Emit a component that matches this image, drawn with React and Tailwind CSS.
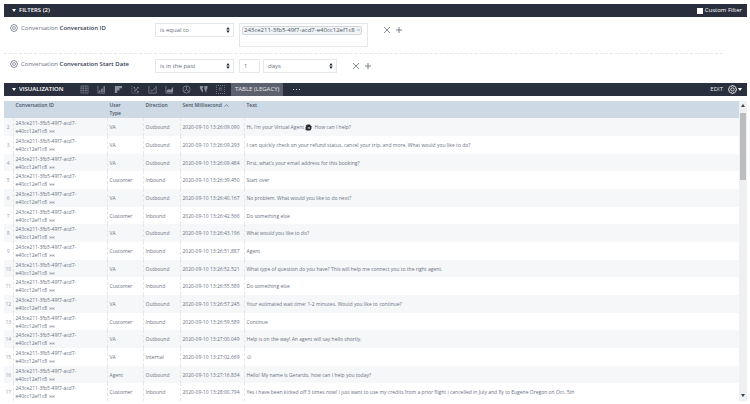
import React, { useState } from 'react';

const CONVERSATION_ID = '243ce211-3fb5-49f7-acd7-e40cc12ef1c8';

const rows = [
  { type: 'VA', direction: 'Outbound', sent: '2020-09-10 13:26:09.090', text: 'Hi, I’m your Virtual Agent', after: 'How can I help?' },
  { type: 'VA', direction: 'Outbound', sent: '2020-09-10 13:26:09.293', text: 'I can quickly check on your refund status, cancel your trip, and more. What would you like to do?' },
  { type: 'VA', direction: 'Outbound', sent: '2020-09-10 13:26:09.484', text: 'First, what’s your email address for this booking?' },
  { type: 'Customer', direction: 'Inbound', sent: '2020-09-10 13:26:39.450', text: 'Start over' },
  { type: 'VA', direction: 'Outbound', sent: '2020-09-10 13:26:40.167', text: 'No problem. What would you like to do next?' },
  { type: 'Customer', direction: 'Inbound', sent: '2020-09-10 13:26:42.566', text: 'Do something else' },
  { type: 'VA', direction: 'Outbound', sent: '2020-09-10 13:26:43.196', text: 'What would you like to do?' },
  { type: 'Customer', direction: 'Inbound', sent: '2020-09-10 13:26:51.887', text: 'Agent' },
  { type: 'VA', direction: 'Outbound', sent: '2020-09-10 13:26:52.521', text: 'What type of question do you have? This will help me connect you to the right agent.' },
  { type: 'Customer', direction: 'Inbound', sent: '2020-09-10 13:26:55.589', text: 'Do something else' },
  { type: 'VA', direction: 'Outbound', sent: '2020-09-10 13:26:57.245', text: 'Your estimated wait time: 1-2 minutes. Would you like to continue?' },
  { type: 'Customer', direction: 'Inbound', sent: '2020-09-10 13:26:59.589', text: 'Continue' },
  { type: 'VA', direction: 'Outbound', sent: '2020-09-10 13:27:00.049', text: 'Help is on the way! An agent will say hello shortly.' },
  { type: 'VA', direction: 'Internal', sent: '2020-09-10 13:27:02.669', text: '∅' },
  { type: 'Agent', direction: 'Outbound', sent: '2020-09-10 13:27:16.834', text: 'Hello! My name is Gerardo, how can I help you today?' },
  { type: 'Customer', direction: 'Inbound', sent: '2020-09-10 13:28:00.794', text: 'Yes i have been kicked off 3 times now! I just want to use my credits from a prior flight i cancelled in July and fly to Eugene Oregon on Oct. 5th' },
];

const charts = [
  { name: 'Table', draw: <path d="M1 1h8v8H1zM1 3.5h8M1 6h8M3.5 1v8M6.5 1v8" strokeDasharray="1.5 0.5" /> },
  { name: 'Column', draw: <><path d="M1 1v8h8" /><path d="M3 8V6M5.5 8V4M8 8V1.5" strokeWidth="1.6" /></> },
  { name: 'Bar', draw: <path d="M1 1h8v2.5H6V6H3.5v3H1z" fill="currentColor" stroke="none" /> },
  { name: 'Scatterplot', draw: <><path d="M1 1v8h8" strokeDasharray="1 1" /><path d="M3 3h1.5M5 5h1.5M7 3h1.5M3.5 6.5H5M7 7.5h1.5" strokeWidth="1.5" /></> },
  { name: 'Line', draw: <path d="M1 1v8h8V1M2.5 5.5l2 1.5L8.5 2.5" /> },
  { name: 'Area', draw: <><path d="M1 1v8h8" /><path d="M2 8V6l2-1.5L6 5.5 9 2v6z" fill="currentColor" stroke="none" /></> },
  { name: 'Pie', draw: <><circle cx="5" cy="5" r="4" /><path d="M5 1v4l3 2.5M5 5L2.5 7" /></> },
  { name: 'Map', draw: <path d="M1 1h4L4.5 3l-1 1 1 1.5L4 9 2.500 6 1 4zM6 1h3.500v2.500L8.500 5 8 9 6.500 6 6 4.500z" fill="currentColor" stroke="none" /> },
];

const GearIcon = ({ className }) => (
  <svg viewBox="0 0 16 16" className={className} fill="none" stroke="currentColor" strokeWidth="1.4">
    <path d="M6.5 1h3l.5 1.7 1.7-.8 2.1 2.1-.8 1.7 2 .8v3l-2 .8.8 1.7-2.1 2.1-1.7-.8-.5 1.7h-3L6 13.300l-1.700.8L2.200 12l.8-1.700-2-.8v-3l2-.8L2.200 4l2.100-2.100 1.700.8z" strokeLinejoin="round" />
    <circle cx="8" cy="8" r="3" />
  </svg>
);

const CaretIcon = () => (
  <svg viewBox="0 0 4 3" className="h-[3px] w-1 fill-white">
    <path d="M0 0h4L2 3z" />
  </svg>
);

const CloseIcon = () => (
  <svg viewBox="0 0 8 8" className="size-2" fill="none" stroke="currentColor" strokeWidth="0.8">
    <path d="M1 1l6 6M7 1L1 7" />
  </svg>
);

const PlusIcon = () => (
  <svg viewBox="0 0 8 8" className="size-2" fill="none" stroke="currentColor" strokeWidth="0.9">
    <path d="M4 1v6M1 4h6" />
  </svg>
);

const RobotIcon = () => (
  <svg viewBox="0 0 12 12" className="mx-px inline-block size-[7px] align-middle">
    <path d="M2 3l2-2h4l3 3v4l-2 3H3L1 9V6z" fill="#22252c" />
    <path d="M4.5 5.5h4v2.500h-4z" fill="#b9bcc2" />
    <circle cx="2.500" cy="3" r="1.200" fill="#4b4f58" />
  </svg>
);

const Select = ({ label, value, className }) => (
  <div className={`relative ${className}`}>
    <select
      aria-label={label}
      defaultValue={value}
      className="block h-[14px] w-full appearance-none border border-gray-200 bg-white pl-1 pr-3 text-[6px] leading-[12px] text-gray-500"
    >
      <option>{value}</option>
    </select>
    <svg viewBox="0 0 4 6" className="pointer-events-none absolute right-1 top-1 h-[6px] w-1 fill-gray-800">
      <path d="M2 0l1.700 2.500H.3zM2 6L.3 3.500h3.400z" />
    </svg>
  </div>
);

const FilterRow = ({ name, className, children }) => (
  <div className={`mr-6 flex items-start gap-px ${className}`}>
    <div className="flex w-[150px] shrink-0 items-center gap-[3px] pl-[6px] text-[6px] leading-[10px] text-gray-500">
      <GearIcon className="size-2 text-gray-500" />
      <span>
        Conversation <strong className="font-semibold text-gray-700">{name}</strong>
      </span>
    </div>
    {children}
  </div>
);

const FilterActions = () => (
  <div className="flex items-center gap-1 pt-[3px] text-gray-500">
    <button aria-label="Remove filter"><CloseIcon /></button>
    <button aria-label="Add filter"><PlusIcon /></button>
  </div>
);

const border = 'border-r border-dashed border-gray-200';
const cell = `${border} px-[2px] py-0`;
const headCell = 'border-r border-dotted border-gray-300 px-[2px] py-0 font-semibold';

export default function App() {
  const [custom, setCustom] = useState(false);

  return (
    <div className="bg-white pl-1 pr-[3px] pt-1 font-['Open_Sans',sans-serif] text-gray-600">
      {/* Filters */}
      <div className="flex h-[13px] items-center justify-between bg-[#2a2f3d] pl-2 pr-[5px] text-[6px] text-white">
        <button className="flex items-center gap-[3px] font-semibold">
          <CaretIcon />
          FILTERS (2)
        </button>
        <label className="flex items-center gap-[2px]">
          <input
            type="checkbox"
            checked={custom}
            onChange={(e) => setCustom(e.target.checked)}
            className="size-[6px] appearance-none bg-white checked:bg-blue-400"
          />
          Custom Filter
        </label>
      </div>

      <FilterRow name="Conversation ID" className="h-[37px] border-b border-dashed border-gray-200 pt-[6px]">
        <Select label="Conversation ID condition" value="is equal to" className="w-[79px]" />
        <div className="ml-1 mr-[14px] flex h-6 w-[129px] items-start border border-gray-200 p-[2px]">
          <span className="flex h-[9px] items-center gap-[2px] whitespace-nowrap rounded-xs border border-gray-300 bg-gray-100 px-px text-[6px] leading-[7px]">
            {CONVERSATION_ID}
            <button aria-label="Remove value" className="text-gray-400">×</button>
          </span>
        </div>
        <FilterActions />
      </FilterRow>

      <FilterRow name="Conversation Start Date" className="pb-[10px] pt-[5px]">
        <Select label="Start date condition" value="is in the past" className="w-[79px]" />
        <input
          aria-label="Number of days"
          defaultValue="1"
          className="ml-1 mr-[2px] h-[14px] w-[21px] border border-gray-200 px-1 text-[6px] text-gray-500"
        />
        <Select label="Unit" value="days" className="mr-[14px] w-[74px]" />
        <FilterActions />
      </FilterRow>

      {/* Visualization */}
      <div className="flex h-[13px] items-center bg-[#2a2f3d] pl-2 pr-[5px] text-[6px] text-white">
        <button className="flex w-[68px] items-center gap-[3px] font-semibold">
          <CaretIcon />
          VISUALIZATION
        </button>
        <div className="flex items-center gap-2 text-[#8b8f99]">
          {charts.map((chart) => (
            <button key={chart.name} aria-label={chart.name}>
              <svg viewBox="0 0 10 10" className="size-[9px]" fill="none" stroke="currentColor" strokeWidth="0.8">
                {chart.draw}
              </svg>
            </button>
          ))}
          <button aria-label="Single value" className="flex size-[9px] items-center justify-center border border-dotted border-[#6b6f7a] text-[6px] leading-[7px]">
            6
          </button>
        </div>
        <button className="ml-[6px] h-[13px] bg-[#5d616d] px-1 text-gray-200">TABLE (LEGACY)</button>
        <button aria-label="More" className="ml-[10px] flex gap-[2px]">
          <span className="size-px bg-gray-300" />
          <span className="size-px bg-gray-300" />
          <span className="size-px bg-gray-300" />
        </button>
        <button className="ml-auto text-gray-200">EDIT</button>
        <button aria-label="Settings" className="ml-[5px] flex items-center gap-px">
          <GearIcon className="size-[9px]" />
          <CaretIcon />
        </button>
      </div>

      {/* Results */}
      <div className="mt-[5px] flex items-stretch">
        <table className="flex-1 table-fixed border-collapse text-left text-[5px] font-medium leading-2 text-gray-500">
          <colgroup>
            <col className="w-[9px]" />
            <col className="w-[94px]" />
            <col className="w-[36px]" />
            <col className="w-[37px]" />
            <col className="w-[64px]" />
            <col />
          </colgroup>
          <thead>
            <tr className="h-[17px] bg-[#cdd9e5] align-top text-gray-600">
              <th className={headCell}></th>
              <th className={headCell}>Conversation ID</th>
              <th className={headCell}>User<br />Type</th>
              <th className={headCell}>Direction</th>
              <th className={`${headCell} whitespace-nowrap`}>
                Sent Millisecond
                <svg viewBox="0 0 6 4" className="ml-[2px] inline-block h-[3px] w-[5px]" fill="none" stroke="currentColor" strokeWidth="0.8">
                  <path d="M.5 3.500L3 .8l2.500 2.700" />
                </svg>
              </th>
              <th className="px-[2px] py-0 font-semibold">Text</th>
            </tr>
          </thead>
          <tbody>
            {rows.map((row, i) => (
              <tr key={row.sent} className="h-[18px] odd:bg-[#f6f7f9] nth-[3n]:h-[17px]">
                <td className={`${border} p-0 text-center text-gray-400`}>{i + 2}</td>
                <td className={`${border} py-0 pl-[2px] pr-4`}>
                  {CONVERSATION_ID}
                  <svg viewBox="0 0 6 3" className="ml-[2px] inline-block h-[3px] w-[6px] fill-gray-400">
                    <path d="M0 0h6v3H0z" opacity="0.3" />
                    <path d="M1 1h1v1H1zM2.500 1h1v1h-1zM4 1h1v1H4z" />
                  </svg>
                </td>
                <td className={cell}>{row.type}</td>
                <td className={cell}>{row.direction}</td>
                <td className={`${cell} whitespace-nowrap`}>{row.sent}</td>
                <td className="px-[2px] py-0">
                  {row.text}
                  {row.after && <><RobotIcon /> {row.after}</>}
                </td>
              </tr>
            ))}
          </tbody>
        </table>

        <div className="flex w-2 shrink-0 flex-col items-center bg-[#eff0f1]" aria-hidden="true">
          <svg viewBox="0 0 4 3" className="mt-[3px] h-[3px] w-1 fill-gray-700"><path d="M0 3h4L2 0z" /></svg>
          <div className="mt-[6px] h-[67px] w-[6px] bg-[#bcbdbe]" />
          <svg viewBox="0 0 4 3" className="mb-1 mt-auto h-[3px] w-1 fill-gray-700"><path d="M0 0h4L2 3z" /></svg>
        </div>
      </div>
    </div>
  );
}
